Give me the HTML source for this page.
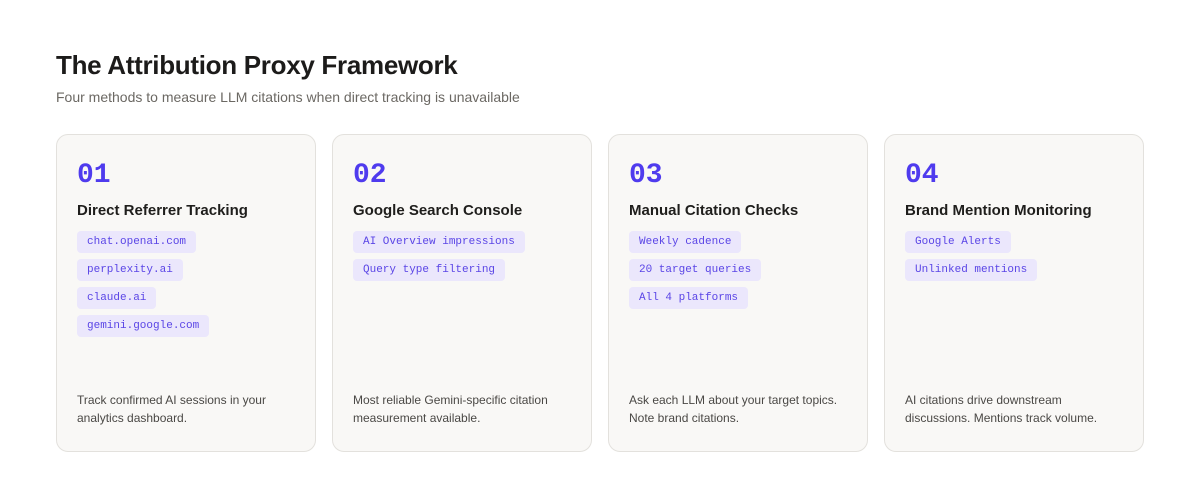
<!DOCTYPE html>
<html><head><meta charset="utf-8"><style>
*{box-sizing:border-box;margin:0;padding:0}
body{width:1200px;height:500px;background:#fff;font-family:"Liberation Sans",sans-serif;position:relative;overflow:hidden}
h1{position:absolute;left:56px;top:50px;font-size:26px;font-weight:700;color:#1c1b1a;letter-spacing:-0.3px}
.sub{position:absolute;left:56px;top:89px;font-size:14px;color:#6b6863}
.card{position:absolute;top:134px;width:260px;height:318px;background:#f9f8f6;border:1px solid #e3e1dd;border-radius:12px;padding:0 20px}
.num{position:absolute;left:20px;top:25px;font-family:"Liberation Mono",monospace;font-weight:700;font-size:28px;color:#4f3bee}
.t{position:absolute;left:20px;top:67px;font-size:15px;font-weight:700;color:#1f1e1c}
.tags{position:absolute;left:20px;top:96px}
.tag{display:table;height:22px;line-height:22px;padding:0 10px;margin-bottom:6px;background:#ebe7fc;border-radius:4px;font-family:"Liberation Mono",monospace;font-size:11px;color:#5a45e6}
.d{position:absolute;left:20px;top:256px;width:215px;font-size:12px;line-height:18px;color:#4a4845}
</style></head><body>
<h1>The Attribution Proxy Framework</h1>
<div class="sub">Four methods to measure LLM citations when direct tracking is unavailable</div>
<div class="card" style="left:56px"><div class="num">01</div><div class="t">Direct Referrer Tracking</div>
<div class="tags"><div class="tag">chat.openai.com</div><div class="tag">perplexity.ai</div><div class="tag">claude.ai</div><div class="tag">gemini.google.com</div></div>
<div class="d">Track confirmed AI sessions in your analytics dashboard.</div></div>
<div class="card" style="left:332px"><div class="num">02</div><div class="t">Google Search Console</div>
<div class="tags"><div class="tag">AI Overview impressions</div><div class="tag">Query type filtering</div></div>
<div class="d">Most reliable Gemini-specific citation measurement available.</div></div>
<div class="card" style="left:608px"><div class="num">03</div><div class="t">Manual Citation Checks</div>
<div class="tags"><div class="tag">Weekly cadence</div><div class="tag">20 target queries</div><div class="tag">All 4 platforms</div></div>
<div class="d">Ask each LLM about your target topics. Note brand citations.</div></div>
<div class="card" style="left:884px"><div class="num">04</div><div class="t">Brand Mention Monitoring</div>
<div class="tags"><div class="tag">Google Alerts</div><div class="tag">Unlinked mentions</div></div>
<div class="d">AI citations drive downstream discussions. Mentions track volume.</div></div>
</body></html>
